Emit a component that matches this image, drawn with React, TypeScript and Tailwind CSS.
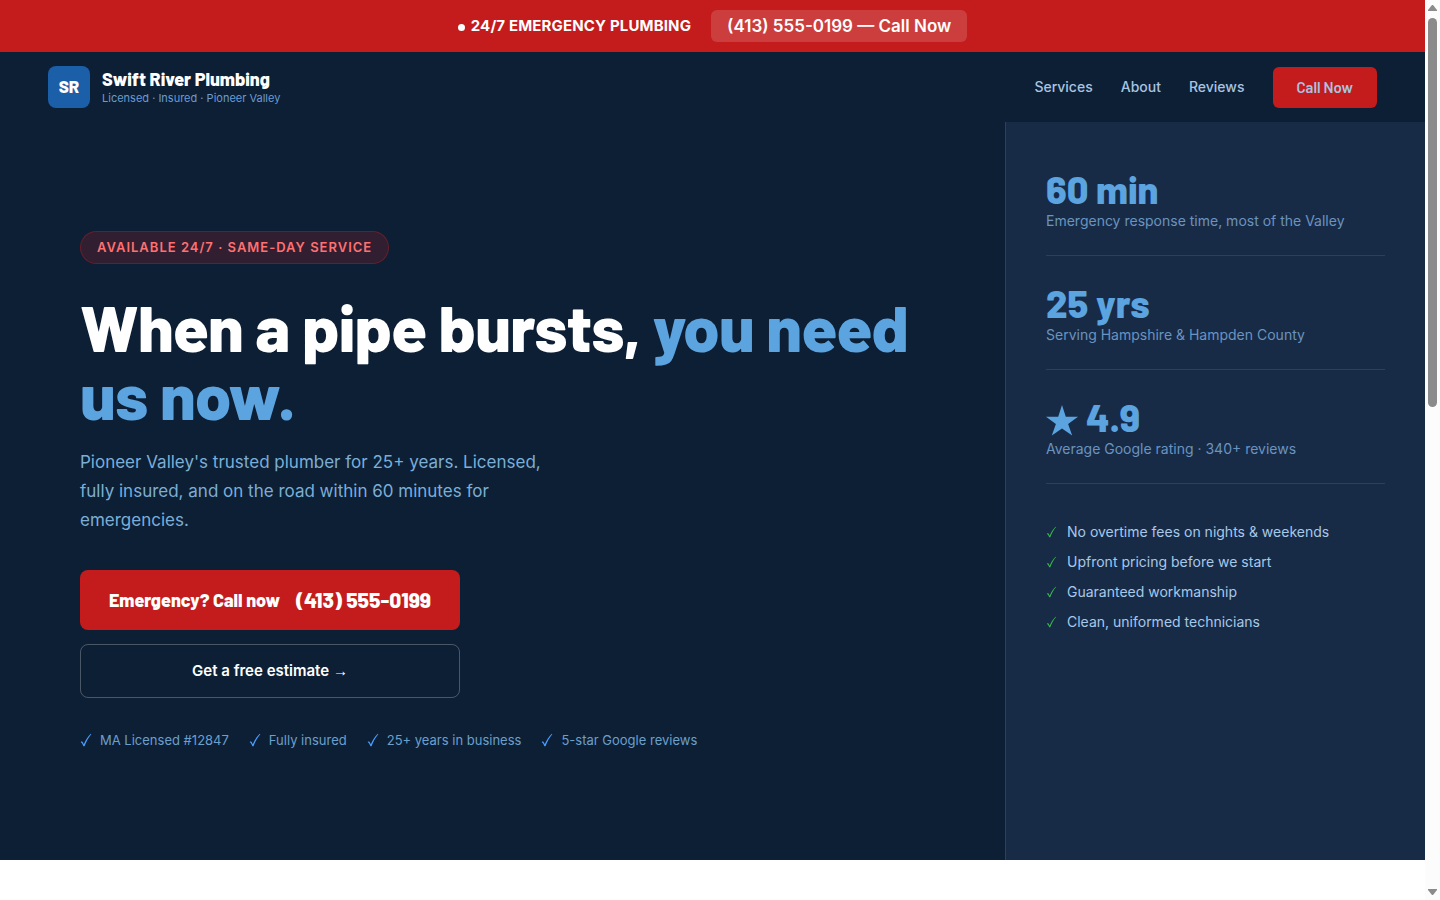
import { memo } from 'react';

interface Stat {
  value: string;
  label: string;
  starred?: boolean;
}

const NAV_LINKS = ['Services', 'About', 'Reviews'];

const TRUST_ITEMS = [
  'MA Licensed #12847',
  'Fully insured',
  '25+ years in business',
  '5-star Google reviews',
];

const STATS: Stat[] = [
  { value: '60 min', label: 'Emergency response time, most of the Valley' },
  { value: '25 yrs', label: 'Serving Hampshire & Hampden County' },
  { value: '4.9', label: 'Average Google rating · 340+ reviews', starred: true },
];

const PROMISES = [
  'No overtime fees on nights & weekends',
  'Upfront pricing before we start',
  'Guaranteed workmanship',
  'Clean, uniformed technicians',
];

const CheckIcon = ({ className }: { className: string }) => (
  <svg viewBox="0 0 12 14" aria-hidden="true" className={className}>
    <path
      d="M0.6 9 L2 8.2 C2.8 9.1 3.4 10.1 3.8 11.3 C5.6 7 7.8 3.6 10.8 0.8 L11.3 1.2 C8.4 4.7 6.2 8.6 4.5 13.2 L3.4 13.2 C2.8 11.4 1.9 10 0.6 9 Z"
      fill="currentColor"
    />
  </svg>
);

const StarIcon = () => (
  <svg viewBox="0 0 32 31" aria-hidden="true" className="h-[31px] w-8">
    <path
      d="M16 0 L19.8 11.7 L32 11.7 L22.1 18.9 L26.2 30.6 L16 23.4 L5.8 30.6 L9.9 18.9 L0 11.7 L12.2 11.7 Z"
      fill="currentColor"
    />
  </svg>
);

const EmergencyBar = memo(() => (
  <div className="flex items-center justify-center gap-5 bg-[#c41c1c] px-6 py-2.5 text-white">
    <span className="flex items-center gap-1.5 text-[15px] leading-8 font-bold tracking-[0.01em]">
      <span className="mt-0.5 size-[7px] rounded-full bg-white" />
      24/7 EMERGENCY PLUMBING
    </span>
    <a href="#call" className="rounded-md bg-white/15 px-4 text-[17px] leading-8 font-semibold">
      (413) 555-0199 — Call Now
    </a>
  </div>
));
EmergencyBar.displayName = 'EmergencyBar';

const Header = memo(() => (
  <header className="flex items-center justify-between bg-[#0d1f35] px-12 py-3.5">
    <a href="#top" className="flex items-center gap-3">
      <span className="flex size-[42px] items-center justify-center rounded-lg bg-[#1a5fa8] font-['Barlow','Roboto',sans-serif] text-[17px] font-extrabold text-white">
        SR
      </span>
      <span className="flex flex-col">
        <span className="font-['Barlow','Roboto',sans-serif] text-lg leading-[22px] font-extrabold text-white">
          Swift River Plumbing
        </span>
        <span className="text-[11px] leading-4 text-[#6b9bd1]">
          Licensed · Insured · Pioneer Valley
        </span>
      </span>
    </a>
    <nav className="flex items-center gap-7 text-sm leading-6 font-medium text-[#a8c4e0]">
      {NAV_LINKS.map((link) => (
        <a key={link} href={`#${link.toLowerCase()}`}>
          {link}
        </a>
      ))}
      <a
        href="#call"
        className="rounded-md bg-[#c41c1c] px-6 font-['Barlow','Roboto',sans-serif] text-[15px] leading-[41px] font-semibold"
      >
        Call Now
      </a>
    </nav>
  </header>
));
Header.displayName = 'Header';

const Hero = memo(() => (
  <section className="flex flex-1 flex-col items-start justify-center px-20 pb-0.5">
    <div className="rounded-full border border-[#c41c1c]/40 bg-[#c41c1c]/20 px-4 text-[13px] leading-[31px] font-semibold tracking-[1px] text-[#ff7070]">
      AVAILABLE 24/7 · SAME-DAY SERVICE
    </div>
    <h1 className="mt-7 font-['Barlow','Roboto',sans-serif] text-[65px] leading-[68px] font-extrabold tracking-[-0.01em] text-white">
      When a pipe bursts, <span className="text-[#5ba4e0]">you need us now.</span>
    </h1>
    <p className="mt-5 max-w-[480px] text-[17px] leading-[29px] text-[#7baed6]">
      Pioneer Valley's trusted plumber for 25+ years. Licensed, fully insured, and on the road
      within 60 minutes for emergencies.
    </p>
    <div className="mt-[35px] flex w-[380px] flex-col gap-3.5">
      <a
        href="#call"
        className="flex items-center justify-center gap-4 rounded-lg bg-[#c41c1c] font-['Barlow','Roboto',sans-serif] font-extrabold text-white"
      >
        <span className="text-lg leading-[60px]">Emergency? Call now</span>
        <span className="text-[21px] leading-[60px]">(413) 555-0199</span>
      </a>
      <a
        href="#estimate"
        className="rounded-lg border border-white/25 text-center text-[15px] leading-[52px] font-semibold text-white"
      >
        Get a free estimate <span className="font-['Liberation_Sans',sans-serif] font-normal">→</span>
      </a>
    </div>
    <ul className="mt-8 flex flex-wrap gap-5 text-[13px] leading-5 text-[#6b9fcc]">
      {TRUST_ITEMS.map((item) => (
        <li key={item} className="flex items-center gap-2">
          <CheckIcon className="h-3.5 w-3 text-[#4a9eff]" />
          {item}
        </li>
      ))}
    </ul>
  </section>
));
Hero.displayName = 'Hero';

const StatsPanel = memo(() => (
  <aside className="w-[420px] border-l border-white/10 bg-[#172b47] px-10 pt-12">
    {STATS.map((stat) => (
      <div key={stat.label} className="mb-7 border-b border-white/10 pb-6">
        <div className="flex items-end gap-2 font-['Barlow','Roboto',sans-serif] text-[38px] leading-[38px] font-extrabold text-[#5ba4e0]">
          {stat.starred ? <StarIcon /> : null}
          {stat.value}
        </div>
        <div className="mt-[3px] text-sm leading-5 text-[#6b93bf]">{stat.label}</div>
      </div>
    ))}
    <ul className="mt-[37px] flex flex-col gap-2 text-sm leading-[22px] text-[#a8c8e8]">
      {PROMISES.map((item) => (
        <li key={item} className="flex items-center gap-2.5">
          <CheckIcon className="h-3 w-[11px] text-[#3fb950]" />
          {item}
        </li>
      ))}
    </ul>
  </aside>
));
StatsPanel.displayName = 'StatsPanel';

const ScrollTrack = () => (
  <div
    aria-hidden="true"
    className="flex w-[15px] flex-none flex-col items-center justify-between bg-[#fcfcfc] py-1 text-[#8b8b8b]"
  >
    <div className="flex w-full flex-1 flex-col items-center gap-1.5">
      <svg viewBox="0 0 9 8" className="h-2 w-[9px]">
        <path d="M4 1h1l4 5v1H0V6z" fill="currentColor" />
      </svg>
      <div className="h-[44%] w-[9px] rounded-full bg-[#8b8b8b]" />
    </div>
    <svg viewBox="0 0 9 8" className="h-2 w-[9px]">
      <path d="M4 7h1l4-5V1H0v1z" fill="currentColor" />
    </svg>
  </div>
);

export default function App() {
  return (
    <div className="flex min-h-screen bg-white font-['Inter',sans-serif]">
      <div className="flex flex-1 flex-col">
        <EmergencyBar />
        <Header />
        <main className="mb-10 flex flex-1 bg-[#0d1f35]">
          <Hero />
          <StatsPanel />
        </main>
      </div>
      <ScrollTrack />
    </div>
  );
}
